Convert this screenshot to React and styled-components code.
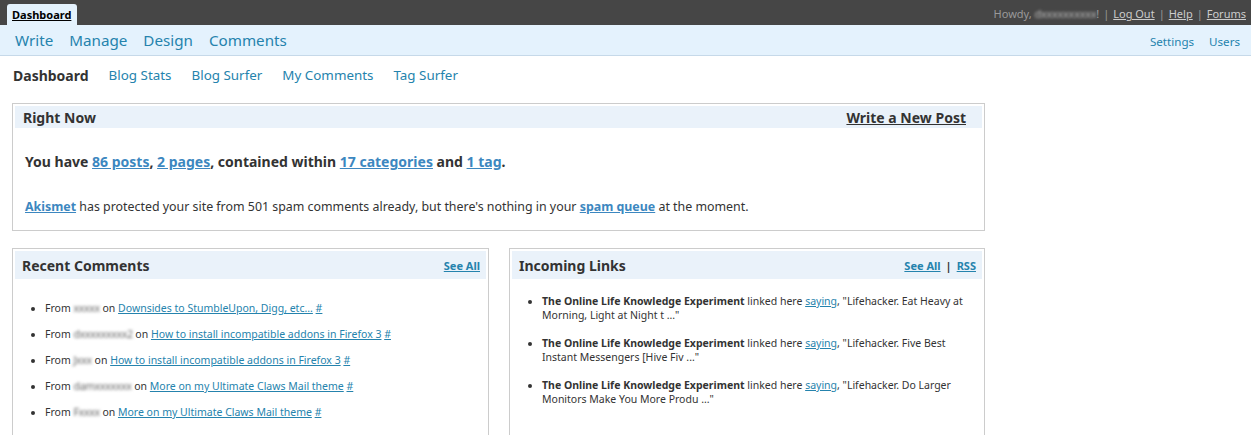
import React from "react";
import styled, { createGlobalStyle } from "styled-components";

const GlobalStyle = createGlobalStyle`
  body {
    margin: 0;
    background: #fff;
    font-family: "Noto Sans", "Open Sans", sans-serif;
    color: #333;
  }
`;

const TopBar = styled.div`
  height: 25px;
  background: #464646;
  display: flex;
  align-items: flex-end;
  justify-content: space-between;
  padding: 0 5px 0 7px;
`;

const Tab = styled.a`
  height: 21px;
  padding: 0 6px 0 5px;
  background: #e4f2fd;
  border-radius: 3px 3px 0 0;
  font-size: 11px;
  font-weight: bold;
  color: #000;
  text-decoration: underline;
  display: flex;
  align-items: center;
`;

const UserInfo = styled.div`
  align-self: center;
  font-size: 11px;
  color: #999;
  display: flex;
  gap: 4px;
  padding-top: 2px;
`;

const UserLink = styled.a`
  color: #ccc;
  text-decoration: underline;
`;

const Blur = styled.span`
  display: inline-block;
  filter: blur(1.4px);
  color: ${(p) => p.$color || "#999"};
  letter-spacing: -0.3px;
`;

const NavBar = styled.div`
  height: 30px;
  background: #e4f2fd;
  border-bottom: 1px solid #c6d9e9;
  display: flex;
  align-items: center;
  justify-content: space-between;
  padding: 0 11px 0 15px;
`;

const NavGroup = styled.div`
  display: flex;
  gap: ${(p) => p.$gap}px;
  align-items: center;
`;

const NavLink = styled.a`
  font-size: ${(p) => p.$size}px;
  color: #2583ad;
  text-decoration: none;
  padding-top: ${(p) => p.$pt || 0}px;
`;

const SubMenu = styled.div`
  display: flex;
  gap: 20px;
  padding: 4px 13px 0;
  height: 30px;
  align-items: center;
`;

const SubLink = styled.a`
  font-size: ${(p) => (p.$current ? 14 : 13.4)}px;
  color: ${(p) => (p.$current ? "#333" : "#2583ad")};
  font-weight: ${(p) => (p.$current ? "bold" : "normal")};
  text-decoration: none;
`;

const Page = styled.div`
  padding: 13px 266px 0 12px;
  display: flex;
  flex-direction: column;
  gap: 17px;
`;

const Box = styled.div`
  border: 1px solid #ccc;
  padding: 2px;
  min-height: ${(p) => p.$minh || 0}px;
`;

const BoxHead = styled.div`
  height: ${(p) => p.$h}px;
  background: #eaf2fa;
  display: flex;
  align-items: center;
  justify-content: space-between;
  padding: 0 ${(p) => p.$pr}px 0 ${(p) => p.$pl}px;
`;

const BoxTitle = styled.h3`
  margin: 0;
  font-size: 14px;
  font-weight: bold;
  color: #333;
`;

const HeadAction = styled.a`
  font-size: 14px;
  font-weight: bold;
  color: #333;
  text-decoration: underline;
`;

const HeadLinks = styled.div`
  display: flex;
  gap: 5px;
  font-size: 11px;
  font-weight: bold;
  color: #333;
`;

const SmallLink = styled.a`
  color: #2583ad;
  text-decoration: underline;
`;

const RightNowBody = styled.div`
  padding: 24px 8px 13px 10px;
`;

const BigLine = styled.p`
  margin: 0 0 27px;
  font-size: 14px;
  font-weight: bold;
  color: #333;
`;

const SmallLine = styled.p`
  margin: 0;
  font-size: 12.4px;
  color: #333;
`;

const BlueLink = styled.a`
  color: #3c87c0;
  font-weight: bold;
  text-decoration: underline;
`;

const Columns = styled.div`
  display: grid;
  grid-template-columns: 477px 476px;
  gap: 20px;
`;

const List = styled.ul`
  margin: 0;
  padding: ${(p) => p.$pt}px 10px 0 ${(p) => p.$pl}px;
  font-size: 10.5px;
  color: #333;
`;

const Item = styled.li`
  line-height: ${(p) => p.$lh}px;
  margin-bottom: ${(p) => p.$mb}px;
`;

const ItemLink = styled.a`
  color: #2583ad;
  text-decoration: underline;
`;

const comments = [
  { name: "xxxxx", on: "Downsides to StumbleUpon, Digg, etc..." },
  { name: "dxxxxxxxxx2", on: "How to install incompatible addons in Firefox 3" },
  { name: "Jxxx", on: "How to install incompatible addons in Firefox 3" },
  { name: "damxxxxxxx", on: "More on my Ultimate Claws Mail theme" },
  { name: "Fxxxx", on: "More on my Ultimate Claws Mail theme" },
];

const links = [
  "Lifehacker. Eat Heavy at Morning, Light at Night t ...",
  "Lifehacker. Five Best Instant Messengers [Hive Fiv ...",
  "Lifehacker. Do Larger Monitors Make You More Produ ...",
];

export default function App() {
  return (
    <>
      <GlobalStyle />
      <TopBar>
        <Tab>Dashboard</Tab>
        <UserInfo>
          <span>
            Howdy, <Blur $color="#bbb">dxxxxxxxxxx</Blur>!
          </span>
          <span>|</span>
          <UserLink>Log Out</UserLink>
          <span>|</span>
          <UserLink>Help</UserLink>
          <span>|</span>
          <UserLink>Forums</UserLink>
        </UserInfo>
      </TopBar>
      <NavBar>
        <NavGroup $gap={16}>
          <NavLink $size={15.2}>Write</NavLink>
          <NavLink $size={15.2}>Manage</NavLink>
          <NavLink $size={15.2}>Design</NavLink>
          <NavLink $size={15.2}>Comments</NavLink>
        </NavGroup>
        <NavGroup $gap={15}>
          <NavLink $size={11.6} $pt={3}>Settings</NavLink>
          <NavLink $size={11.6} $pt={3}>Users</NavLink>
        </NavGroup>
      </NavBar>
      <SubMenu>
        <SubLink $current>Dashboard</SubLink>
        <SubLink>Blog Stats</SubLink>
        <SubLink>Blog Surfer</SubLink>
        <SubLink>My Comments</SubLink>
        <SubLink>Tag Surfer</SubLink>
      </SubMenu>
      <Page>
        <Box>
          <BoxHead $h={22} $pl={8} $pr={16}>
            <BoxTitle>Right Now</BoxTitle>
            <HeadAction>Write a New Post</HeadAction>
          </BoxHead>
          <RightNowBody>
            <BigLine>
              You have <BlueLink>86 posts</BlueLink>, <BlueLink>2 pages</BlueLink>,
              contained within <BlueLink>17 categories</BlueLink> and{" "}
              <BlueLink>1 tag</BlueLink>.
            </BigLine>
            <SmallLine>
              <BlueLink>Akismet</BlueLink> has protected your site from 501 spam
              comments already, but there's nothing in your{" "}
              <BlueLink>spam queue</BlueLink> at the moment.
            </SmallLine>
          </RightNowBody>
        </Box>
        <Columns>
          <Box $minh={200}>
            <BoxHead $h={28} $pl={7} $pr={6}>
              <BoxTitle>Recent Comments</BoxTitle>
              <HeadLinks>
                <SmallLink>See All</SmallLink>
              </HeadLinks>
            </BoxHead>
            <List $pt={21} $pl={30}>
              {comments.map((c, i) => (
                <Item key={i} $lh={16} $mb={10}>
                  From <Blur $color="#666">{c.name}</Blur> on{" "}
                  <ItemLink>{c.on}</ItemLink> <ItemLink>#</ItemLink>
                </Item>
              ))}
            </List>
          </Box>
          <Box $minh={200}>
            <BoxHead $h={28} $pl={7} $pr={6}>
              <BoxTitle>Incoming Links</BoxTitle>
              <HeadLinks>
                <SmallLink>See All</SmallLink>
                <span>|</span>
                <SmallLink>RSS</SmallLink>
              </HeadLinks>
            </BoxHead>
            <List $pt={15} $pl={30}>
              {links.map((l, i) => (
                <Item key={i} $lh={14} $mb={14}>
                  <b>The Online Life Knowledge Experiment</b> linked here{" "}
                  <ItemLink>saying</ItemLink>, "{l}"
                </Item>
              ))}
            </List>
          </Box>
        </Columns>
      </Page>
    </>
  );
}
